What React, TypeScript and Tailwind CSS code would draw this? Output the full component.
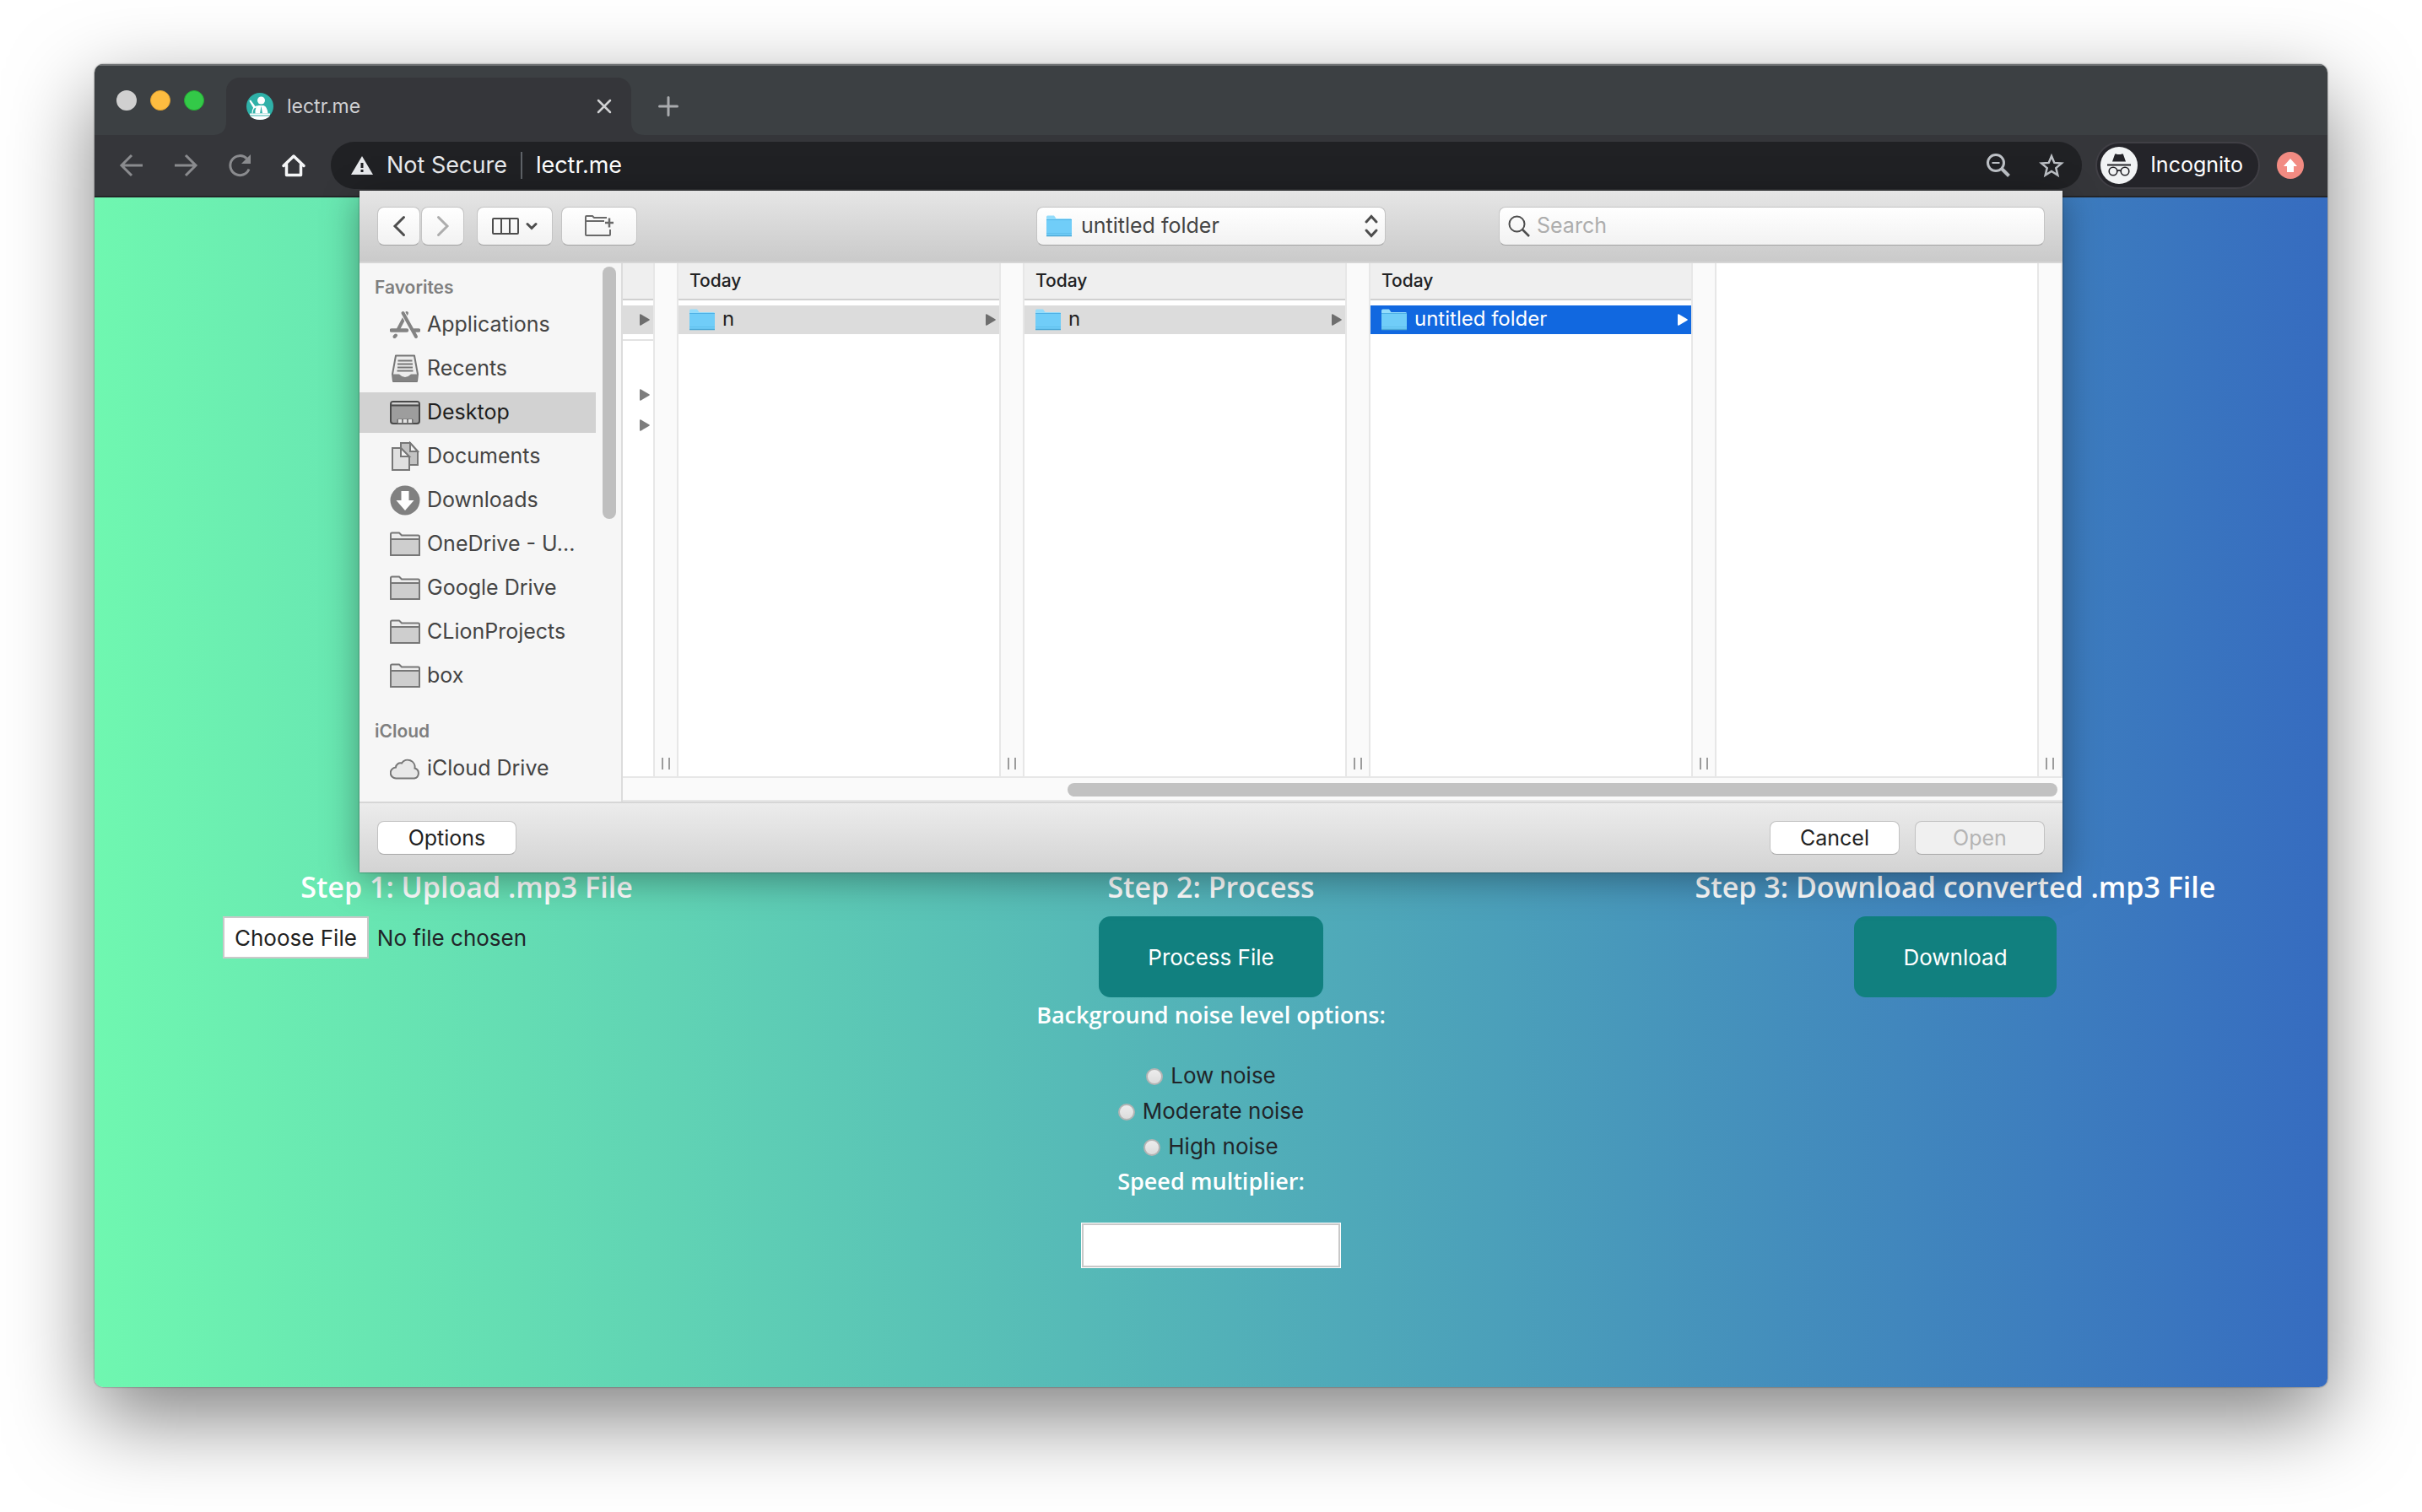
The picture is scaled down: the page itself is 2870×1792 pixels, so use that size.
import { useState, type ReactNode } from 'react';

interface SidebarItem {
  label: string;
  icon: ReactNode;
}

interface FinderColumn {
  header: string;
  items: string[];
  active?: boolean;
}

function AppsIcon() {
  return (
    <svg width="36" height="36" viewBox="0 0 36 36" fill="none" stroke="#838383" strokeWidth="4" strokeLinecap="round">
      <path d="M20 4 10 23" />
      <path d="M15.500 4 31 32" stroke="#f6f6f6" strokeWidth="6" strokeLinecap="butt" />
      <path d="M15.500 4 31 32" />
      <path d="M7 30.500 5.500 32" />
      <path d="M2 24.500h18M29 24.500h5" strokeWidth="4.500" />
    </svg>
  );
}

function RecentsIcon() {
  return (
    <svg width="36" height="36" viewBox="0 0 36 36">
      <path d="M7 2.500h22l4 22-1 8.500H4l-1-8.500z" fill="#ececec" stroke="#777" strokeWidth="2" strokeLinejoin="round" />
      <path d="M9.500 8.500h17M9 12.500h18M9 16.500h18M8.500 20.500h19" stroke="#777" strokeWidth="2" />
      <path d="M3 24.500h8q7 7 14 0h8l-1 8.500H4z" fill="#838383" />
    </svg>
  );
}

function DesktopIcon() {
  return (
    <svg width="36" height="36" viewBox="0 0 36 36">
      <rect x="1" y="5" width="34" height="26" rx="3" fill="#9d9d9d" stroke="#4a4a4a" strokeWidth="2" />
      <path d="M2.500 6h31v2.500h-31z" fill="#d0d0d0" />
      <path d="M2 9.500h32" stroke="#4a4a4a" strokeWidth="2" />
      <path d="M9 31v-5h18v5" fill="#7d7d7d" stroke="#6a6a6a" />
      <path d="M10 26h4v4h-4zM16 26h4v4h-4zM22 26h4v4h-4z" fill="#e4e4e4" />
    </svg>
  );
}

function DocumentsIcon() {
  return (
    <svg width="36" height="36" viewBox="0 0 36 36" stroke="#777" strokeWidth="2">
      <path d="M13 2h11l9 10v16H13z" fill="#c2c2c2" />
      <path d="M24 2v10h9z" fill="#f3f3f3" />
      <path d="M3 8h10l10 11v15H3z" fill="#e0e0e0" />
      <path d="M13 8v10h10z" fill="#f3f3f3" />
    </svg>
  );
}

function DownloadsIcon() {
  return (
    <svg width="36" height="36" viewBox="0 0 36 36">
      <circle cx="18" cy="18" r="17.500" fill="#808080" />
      <path d="M13.500 7h9v11h6L18 30 7.500 18h6z" fill="#fff" />
    </svg>
  );
}

function OutlineFolderIcon() {
  return (
    <svg width="36" height="36" viewBox="0 0 36 36" stroke="#777" strokeWidth="2" strokeLinejoin="round">
      <path d="M1 31V6q0-1.500 1.500-1.500H11l3 3h19.500Q35 7.500 35 9v22z" fill="#ececec" />
      <path d="M1 12h34v19H1z" fill="#cecece" />
    </svg>
  );
}

function CloudIcon() {
  return (
    <svg width="36" height="36" viewBox="0 0 36 36">
      <path
        d="M7.500 29.500a6.500 6.500 0 0 1-.5-13 5.500 5.500 0 0 1 7-5 8.500 8.500 0 0 1 15.500 6 6.200 6.200 0 0 1-.5 12z"
        fill="#e8e8e8"
        stroke="#777"
        strokeWidth="2"
      />
    </svg>
  );
}

function BlueFolder() {
  return (
    <svg width="30" height="26" viewBox="0 0 30 26" className="shrink-0">
      <path d="M0 2q0-1.500 1.500-1.500H9L11.500 4H28.500Q30 4 30 5.500V24H0z" fill="#93dcfb" />
      <path d="M0 6h30v17.500q0 1-1 1H1q-1 0-1-1z" fill="#70cdf8" />
      <path d="M0 5.500h30" stroke="#4fb2e6" strokeWidth="1" />
      <path d="M0 24.500h30" stroke="#4da9d6" strokeWidth="1.500" />
      <path d="M0 21.500h30" stroke="#5fbfec" strokeWidth="1" />
    </svg>
  );
}

function Arrow({ className }: { className: string }) {
  return (
    <svg width="12" height="14" viewBox="0 0 12 14" className={'shrink-0 ' + className}>
      <path d="M0 1.500Q0-.3 1.600.6L11.300 6.300q1 .7 0 1.400L1.600 13.400Q0 14.300 0 12.500z" fill="currentColor" />
    </svg>
  );
}

const FAVORITES: SidebarItem[] = [
  { label: 'Applications', icon: <AppsIcon /> },
  { label: 'Recents', icon: <RecentsIcon /> },
  { label: 'Desktop', icon: <DesktopIcon /> },
  { label: 'Documents', icon: <DocumentsIcon /> },
  { label: 'Downloads', icon: <DownloadsIcon /> },
  { label: 'OneDrive - U...', icon: <OutlineFolderIcon /> },
  { label: 'Google Drive', icon: <OutlineFolderIcon /> },
  { label: 'CLionProjects', icon: <OutlineFolderIcon /> },
  { label: 'box', icon: <OutlineFolderIcon /> },
];

const COLUMNS: FinderColumn[] = [
  { header: 'Today', items: ['n'] },
  { header: 'Today', items: ['n'] },
  { header: 'Today', items: ['untitled folder'], active: true },
];

const NOISE_LEVELS = ['Low noise', 'Moderate noise', 'High noise'];

const toolButton =
  'flex h-[46px] items-center justify-center rounded-lg border border-[#c4c4c4] border-b-[#a3a3a3] bg-linear-to-b from-white to-[#f2f2f2]';

const footerButton = 'h-10 rounded-lg border border-[#c2c2c2] border-b-[#a8a8a8] text-[25px] leading-none';

function TabStrip() {
  return (
    <div className="flex h-[84px] items-end border-t-2 border-[#6d7072] bg-[#3c4043]">
      <div className="flex h-full items-center gap-4 pl-[26px]">
        <button type="button" aria-label="Close window" className="size-6 rounded-full bg-[#d0d0d0]" />
        <button type="button" aria-label="Minimize window" className="size-6 rounded-full border border-[#e0a131] bg-[#fdbc40]" />
        <button type="button" aria-label="Zoom window" className="size-6 rounded-full border border-[#26a934] bg-[#33c948]" />
      </div>
      <div className="relative ml-[26px] flex h-[68px] w-[480px] items-center rounded-t-2xl bg-[#35363a] pr-[21px] pl-6">
        <svg width="16" height="16" viewBox="0 0 16 16" className="absolute bottom-0 -left-4">
          <path d="M16 0v16H0Q16 16 16 0z" fill="#35363a" />
        </svg>
        <svg width="16" height="16" viewBox="0 0 16 16" className="absolute -right-4 bottom-0">
          <path d="M0 0v16h16Q0 16 0 0z" fill="#35363a" />
        </svg>
        <svg width="32" height="32" viewBox="0 0 32 32">
          <circle cx="16" cy="16" r="16" fill="#2fb1a8" />
          <circle cx="17.500" cy="9" r="4.500" fill="#fff" />
          <path d="M5 8.500 10.500 16l4-1h6q4.500 2 5 9.500h-15q-.5-4 1-7l-3 1-5.200-9z" fill="#fff" />
          <path d="M17.500 15.500l1.500 9h-3z" fill="#2fb1a8" />
          <path d="M7 24.500q0-7 5-8.500" fill="none" stroke="#fff" strokeWidth="1.200" />
          <path d="M4 25.500h24" stroke="#fff" strokeWidth="2" />
          <path d="M4 27.500h24Q23 32 16 32T4 27.500z" fill="#fff" />
        </svg>
        <span className="flex-1 pl-4 text-[23px] text-[#cfd0d2]">lectr.me</span>
        <button type="button" aria-label="Close tab">
          <svg width="22" height="22" viewBox="0 0 22 22" stroke="#cfd0d2" strokeWidth="2.500" strokeLinecap="round">
            <path d="M4 4l14 14M18 4 4 18" />
          </svg>
        </button>
      </div>
      <button type="button" aria-label="New tab" className="mb-[22px] ml-8">
        <svg width="24" height="24" viewBox="0 0 24 24" stroke="#a9abae" strokeWidth="3" strokeLinecap="round">
          <path d="M12 1.500v21M1.500 12h21" />
        </svg>
      </button>
    </div>
  );
}

function AddressBar() {
  return (
    <div className="flex h-[74px] items-center border-b-2 border-[#242528] bg-[#35363a] pr-7 pl-[28px]">
      <div className="flex items-center gap-8">
        <button type="button" aria-label="Back">
          <svg width="32" height="32" viewBox="0 0 32 32" fill="none" stroke="#8a8b8e" strokeWidth="3">
            <path d="M29 16H4M16 4 4 16l12 12" />
          </svg>
        </button>
        <button type="button" aria-label="Forward">
          <svg width="32" height="32" viewBox="0 0 32 32" fill="none" stroke="#8a8b8e" strokeWidth="3">
            <path d="M3 16h25M16 4l12 12-12 12" />
          </svg>
        </button>
        <button type="button" aria-label="Reload">
          <svg width="32" height="32" viewBox="0 0 32 32" fill="none" stroke="#8a8b8e" strokeWidth="3">
            <path d="M27 20.500a11.500 11.500 0 1 1-2.500-12.500" />
            <path d="M29 3v11H18z" fill="#8a8b8e" stroke="none" />
          </svg>
        </button>
        <button type="button" aria-label="Home">
          <svg width="32" height="32" viewBox="0 0 32 32" fill="none" stroke="#f4f5f6" strokeWidth="3.500" strokeLinejoin="round">
            <path d="M4 16.500 16 5l12 11.500M7.500 15v12.500h17V15" strokeLinecap="round" />
          </svg>
        </button>
      </div>
      <div className="ml-7 flex h-14 flex-1 items-center rounded-full bg-[#202124] pr-5 pl-6">
        <svg width="26" height="22" viewBox="0 0 26 22">
          <path d="M13 0l13 22H0z" fill="#e8eaed" />
          <path d="M11.500 8h3v6h-3zM11.500 16h3v3h-3z" fill="#202124" />
        </svg>
        <span className="ml-4 text-[27px] text-[#e8eaed]">Not Secure</span>
        <span className="mx-4 h-8 w-[2px] bg-[#5f6368]" />
        <input
          aria-label="Address"
          defaultValue="lectr.me"
          className="min-w-0 flex-1 bg-transparent text-[27px] text-white outline-none"
        />
        <button type="button" aria-label="Zoom">
          <svg width="30" height="30" viewBox="0 0 30 30" fill="none" stroke="#bdc1c6" strokeWidth="3">
            <circle cx="12" cy="12" r="9.500" />
            <path d="M7.500 12h9" strokeWidth="2" />
            <path d="M19 19l8.500 8.500" strokeWidth="4" />
          </svg>
        </button>
        <button type="button" aria-label="Bookmark" className="ml-8">
          <svg width="32" height="32" viewBox="0 0 32 32" fill="none" stroke="#bdc1c6" strokeWidth="2.500">
            <path d="M16 5l3.300 7.900 8.500.7-6.500 5.500 2 8.400L16 23l-7.300 4.500 2-8.400-6.500-5.500 8.500-.7z" />
          </svg>
        </button>
      </div>
      <div className="ml-4 flex h-14 items-center gap-[15px] rounded-full border-2 border-[#403f45] bg-[#242429] pr-[18px] pl-1">
        <svg width="44" height="44" viewBox="0 0 44 44">
          <circle cx="22" cy="22" r="22" fill="#f1f3f4" />
          <path d="M14 17.500l3-8.500q.5-1 1.500-.6 3.500 1.400 7 0 1-.4 1.500.6l3 8.500z" fill="#242429" />
          <path d="M8 21.500h28" stroke="#242429" strokeWidth="2" />
          <g fill="none" stroke="#242429" strokeWidth="1.600">
            <circle cx="15" cy="29" r="4.800" />
            <circle cx="29" cy="29" r="4.800" />
            <path d="M19.800 28.500q2.200-1.200 4.400 0" />
          </g>
        </svg>
        <span className="text-[25px] text-white">Incognito</span>
      </div>
      <button type="button" aria-label="Update" className="ml-5">
        <svg width="32" height="32" viewBox="0 0 32 32">
          <circle cx="16" cy="16" r="16" fill="#f28b82" />
          <path d="M16 8l8 9h-4v7h-8v-7H8z" fill="#fff" />
        </svg>
      </button>
    </div>
  );
}

function DialogToolbar() {
  return (
    <div className="grid h-[86px] grid-cols-[1fr_414px_1fr] items-center border-b-2 border-[#d6d6d6] bg-linear-to-b from-[#e6e6e6] to-[#cacaca] px-[21px]">
      <div className="flex">
        <button type="button" aria-label="Back" className={toolButton + ' w-[51px]'}>
          <svg width="16" height="26" viewBox="0 0 16 26" fill="none" stroke="#4d4d4d" strokeWidth="3" strokeLinecap="round">
            <path d="M13.500 2.500 3 13l10.500 10.500" />
          </svg>
        </button>
        <button type="button" aria-label="Forward" className={toolButton + ' ml-px w-[51px]'}>
          <svg width="16" height="26" viewBox="0 0 16 26" fill="none" stroke="#adadad" strokeWidth="3" strokeLinecap="round">
            <path d="M2.500 2.500 13 13 2.500 23.500" />
          </svg>
        </button>
        <button type="button" aria-label="View" className={toolButton + ' ml-[15px] w-[90px] gap-2'}>
          <svg width="32" height="20" viewBox="0 0 32 20" fill="none" stroke="#4d4d4d" strokeWidth="2">
            <rect x="1" y="1" width="30" height="18" rx="1" />
            <path d="M11 1v18M21 1v18" />
          </svg>
          <svg width="14" height="10" viewBox="0 0 14 10" fill="none" stroke="#4d4d4d" strokeWidth="3" strokeLinecap="round">
            <path d="M2 2.500l5 5 5-5" />
          </svg>
        </button>
        <button type="button" aria-label="New folder" className={toolButton + ' ml-[10px] w-[90px]'}>
          <svg width="36" height="28" viewBox="0 0 36 28" fill="none" stroke="#6a6a6a" strokeWidth="2">
            <path d="M27 4H12L10 2H3q-1 0-1 1v21q0 1 1 1h27q1 0 1-1v-6M2 8h22" />
            <path d="M30 4.500v11M25 10h10" strokeWidth="2.500" />
          </svg>
        </button>
      </div>
      <div className="relative flex items-center">
        <select
          aria-label="Folder"
          className={toolButton + ' w-full appearance-none pl-[52px] text-[25px] text-[#444] outline-none'}
        >
          <option>untitled folder</option>
        </select>
        <span className="pointer-events-none absolute right-2 left-3 flex items-center justify-between">
          <BlueFolder />
          <svg width="18" height="28" viewBox="0 0 18 28" fill="none" stroke="#4d4d4d" strokeWidth="3" strokeLinecap="round">
            <path d="M3 9l6-6.500L15 9M3 19l6 6.500 6-6.500" />
          </svg>
        </span>
      </div>
      <label className={toolButton + ' ml-[134px] gap-2 pl-[10px]'}>
        <svg width="26" height="26" viewBox="0 0 26 26" fill="none" stroke="#4d4d4d" strokeWidth="2">
          <circle cx="10.500" cy="10.500" r="9" />
          <path d="M17 17l8 8" strokeWidth="2.500" />
        </svg>
        <input
          type="search"
          placeholder="Search"
          className="min-w-0 flex-1 bg-transparent text-[25px] outline-none placeholder:text-[#adadad]"
        />
      </label>
    </div>
  );
}

function SidebarRow({ item, selected, onClick }: { item: SidebarItem; selected: boolean; onClick: () => void }) {
  return (
    <button type="button" onClick={onClick} className="flex h-[52px] w-[280px] items-center">
      <span
        className={
          'flex h-12 w-full items-center gap-2 pl-9 text-[25px] ' +
          (selected ? 'bg-[#d2d2d2] text-[#1f1f1f]' : 'text-[#444]')
        }
      >
        {item.icon}
        {item.label}
      </span>
    </button>
  );
}

function Sidebar() {
  const [current, setCurrent] = useState('Desktop');

  return (
    <nav className="flex w-[312px] justify-between border-r-2 border-[#dcdcdc] bg-[#f6f6f6] pr-[6px]">
      <div>
        <div className="flex h-[47px] items-end pb-[6px] pl-[18px] text-[21px] leading-[24px] font-semibold text-[#7f7f7f]">
          Favorites
        </div>
        {FAVORITES.map((item) => (
          <SidebarRow
            key={item.label}
            item={item}
            selected={item.label === current}
            onClick={() => setCurrent(item.label)}
          />
        ))}
        <div className="flex h-[58px] items-end pb-[6px] pl-[18px] text-[21px] leading-[24px] font-semibold text-[#7f7f7f]">
          iCloud
        </div>
        <SidebarRow
          item={{ label: 'iCloud Drive', icon: <CloudIcon /> }}
          selected={current === 'iCloud Drive'}
          onClick={() => setCurrent('iCloud Drive')}
        />
      </div>
      <div className="mt-1 h-[299px] w-4 rounded-full bg-[#bfbfbf]" />
    </nav>
  );
}

function Gutter() {
  return (
    <div className="flex w-[30px] shrink-0 items-end justify-center gap-[6px] border-x-2 border-[#e7e7e7] bg-[#fafafa] pb-2">
      <span className="h-[14px] w-[2px] bg-[#9c9c9c]" />
      <span className="h-[14px] w-[2px] bg-[#9c9c9c]" />
    </div>
  );
}

function Column({ column }: { column: FinderColumn }) {
  return (
    <div className="w-[380px] shrink-0">
      <div className="flex h-11 items-center border-b-2 border-[#d0d0d0] bg-[#efefef] pl-[13px] text-[21px] font-medium text-[#222]">
        {column.header}
      </div>
      <div className="pt-[6px]">
        {column.items.map((name) => (
          <button
            key={name}
            type="button"
            className={
              'flex h-[34px] w-full items-center pr-1 pl-[13px] text-left text-[24px] ' +
              (column.active ? 'bg-[#1168e0] text-white' : 'bg-[#dcdcdc] text-[#222]')
            }
          >
            <BlueFolder />
            <span className="flex-1 pb-[2px] pl-[9px]">{name}</span>
            <Arrow className={column.active ? 'text-white' : 'text-[#6e6e6e]'} />
          </button>
        ))}
      </div>
    </div>
  );
}

function ColumnBrowser() {
  return (
    <div className="flex min-w-0 flex-1 flex-col">
      <div className="flex flex-1 bg-white">
        <div className="min-w-0 flex-1">
          <div className="h-11 border-b-2 border-[#d0d0d0] bg-[#efefef]" />
          <div className="mt-[6px] flex h-[34px] items-center justify-end bg-[#dcdcdc] pr-1">
            <Arrow className="text-[#6e6e6e]" />
          </div>
          <div className="mt-[6px] border-b-2 border-[#e2e2e2]" />
          <div className="flex flex-col items-end gap-[22px] pt-[57px] pr-1">
            <Arrow className="text-[#7d7d7d]" />
            <Arrow className="text-[#7d7d7d]" />
          </div>
        </div>
        <Gutter />
        {COLUMNS.map((column, i) => (
          <div key={i} className="flex">
            <Column column={column} />
            <Gutter />
          </div>
        ))}
        <div className="w-[380px] shrink-0" />
        <Gutter />
      </div>
      <div className="flex h-[30px] items-start justify-end border-y-2 border-[#e7e7e7] bg-[#fafafa] pt-[6px] pr-[6px]">
        <div className="h-4 w-[69%] rounded-full bg-[#c2c2c2]" />
      </div>
    </div>
  );
}

function OpenDialog() {
  return (
    <div
      role="dialog"
      aria-label="Open"
      className="absolute inset-x-[314px] top-[150px] flex h-[808px] flex-col shadow-[0_8px_40px_rgba(0,0,0,0.35),0_0_2px_rgba(0,0,0,0.5)]"
    >
      <DialogToolbar />
      <div className="flex min-h-0 flex-1">
        <Sidebar />
        <ColumnBrowser />
      </div>
      <div className="flex h-[84px] items-center gap-[18px] border-t-2 border-[#d6d6d6] bg-linear-to-b from-[#ececec] to-[#d3d3d3] px-[21px]">
        <button type="button" className={footerButton + ' w-[165px] bg-white text-[#222]'}>
          Options
        </button>
        <button type="button" className={footerButton + ' ml-auto w-[154px] bg-white text-[#222]'}>
          Cancel
        </button>
        <button type="button" disabled className={footerButton + ' w-[154px] bg-[#f0f0f0] text-[#b4b4b4]'}>
          Open
        </button>
      </div>
    </div>
  );
}

const heading = "font-['Open_Sans',sans-serif] font-semibold text-white";
const stepTitle = heading + ' mb-[14px] text-[34px] leading-[42px]';
const optionTitle = heading + ' mb-[29px] text-[27px] leading-[42px]';
const actionButton = 'h-24 rounded-[14px] bg-[#11807f] px-[58px] text-[26px] text-white';

function LecturePage() {
  const [noise, setNoise] = useState('');

  return (
    <main className="grid flex-1 grid-cols-3 content-start bg-linear-to-r/srgb from-[#6ff7b0] to-[#366cc0] pt-[796px] text-[26px] text-[#212529]">
      <section className="flex flex-col items-center">
        <h2 className={stepTitle}>Step 1: Upload .mp3 File</h2>
        <input
          type="file"
          aria-label="Upload .mp3 file"
          className="w-[578px] file:mr-[10px] file:h-[50px] file:border-2 file:border-solid file:border-[#c9c9c9] file:bg-white file:px-3 file:text-[26px] file:text-[#212121]"
        />
      </section>

      <section className="flex flex-col items-center">
        <h2 className={stepTitle}>Step 2: Process</h2>
        <button type="button" className={actionButton}>
          Process File
        </button>
        <h3 className={optionTitle}>Background noise level options:</h3>
        {NOISE_LEVELS.map((level) => (
          <label key={level} className="flex h-[42px] items-center gap-[9px]">
            <input
              type="radio"
              name="noise"
              checked={noise === level}
              onChange={() => setNoise(level)}
              className="mt-1 size-5 appearance-none rounded-full border-2 border-[#b4b4b4] bg-linear-to-b from-[#ededed] to-[#dcdcdc] checked:border-[#1168e0]"
            />
            {level}
          </label>
        ))}
        <label htmlFor="speed" className={optionTitle}>
          Speed multiplier:
        </label>
        <input
          id="speed"
          type="text"
          className="h-[52px] w-[306px] border-2 border-[#c9c9c9] bg-white px-2 outline outline-white"
        />
      </section>

      <section className="flex flex-col items-center">
        <h2 className={stepTitle}>Step 3: Download converted .mp3 File</h2>
        <button type="button" className={actionButton}>
          Download
        </button>
      </section>
    </main>
  );
}

export default function App() {
  return (
    <div className="flex min-h-screen bg-white px-28 pt-[76px] pb-[148px] font-['Inter','Liberation_Sans',sans-serif]">
      <div className="relative flex flex-1 flex-col rounded-[10px] shadow-[0_36px_100px_rgba(0,0,0,0.5),0_0_2px_rgba(0,0,0,0.6)]">
        <div className="flex flex-1 flex-col overflow-hidden rounded-[10px]">
          <TabStrip />
          <AddressBar />
          <LecturePage />
        </div>
        <OpenDialog />
      </div>
    </div>
  );
}
